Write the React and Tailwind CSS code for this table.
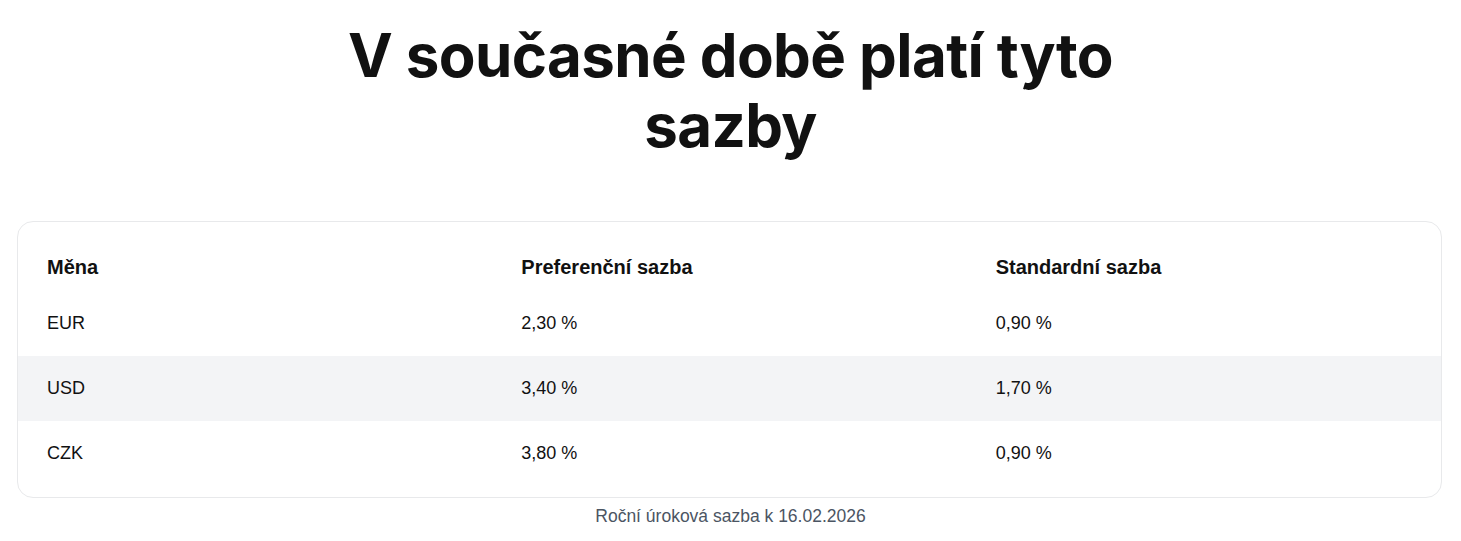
export default function App() {
  const rows = [
    ["EUR", "2,30 %", "0,90 %"],
    ["USD", "3,40 %", "1,70 %"],
    ["CZK", "3,80 %", "0,90 %"],
  ];
  return (
    <div className="w-[1461px] h-[541px] bg-white overflow-hidden">
      <h1
        className="mx-auto max-w-[820px] pt-[20px] text-center text-[60px] leading-[70px] font-bold text-[#111111] tracking-[-0.6px]"
        style={{ fontFamily: "Inter, sans-serif" }}
      >
        V současné době platí tyto sazby
      </h1>
      <div
        className="ml-[17px] mr-[19px] mt-[61px] rounded-[16px] border border-[#e8e9eb] pt-[11px] pb-[11px] text-[18px] text-[#111111]"
        style={{ fontFamily: '"Liberation Sans", Arial, sans-serif' }}
      >
        <div className="grid grid-cols-3 h-[58px] items-center font-bold text-[20px] pt-[9px]">
          <div className="pl-[29px]">Měna</div>
          <div className="pl-[29px]">Preferenční sazba</div>
          <div className="pl-[29px]">Standardní sazba</div>
        </div>
        {rows.map((r, i) => (
          <div
            key={r[0]}
            className={`grid grid-cols-3 h-[65px] items-center ${i === 1 ? "bg-[#f3f4f6]" : ""}`}
          >
            {r.map((c, j) => (
              <div key={j} className="pl-[29px]">
                {c}
              </div>
            ))}
          </div>
        ))}
      </div>
      <p
        className="mt-[5px] text-center text-[17.5px] text-[#4b5563]"
        style={{ fontFamily: '"Liberation Sans", Arial, sans-serif' }}
      >
        Roční úroková sazba k 16.02.2026
      </p>
    </div>
  );
}
